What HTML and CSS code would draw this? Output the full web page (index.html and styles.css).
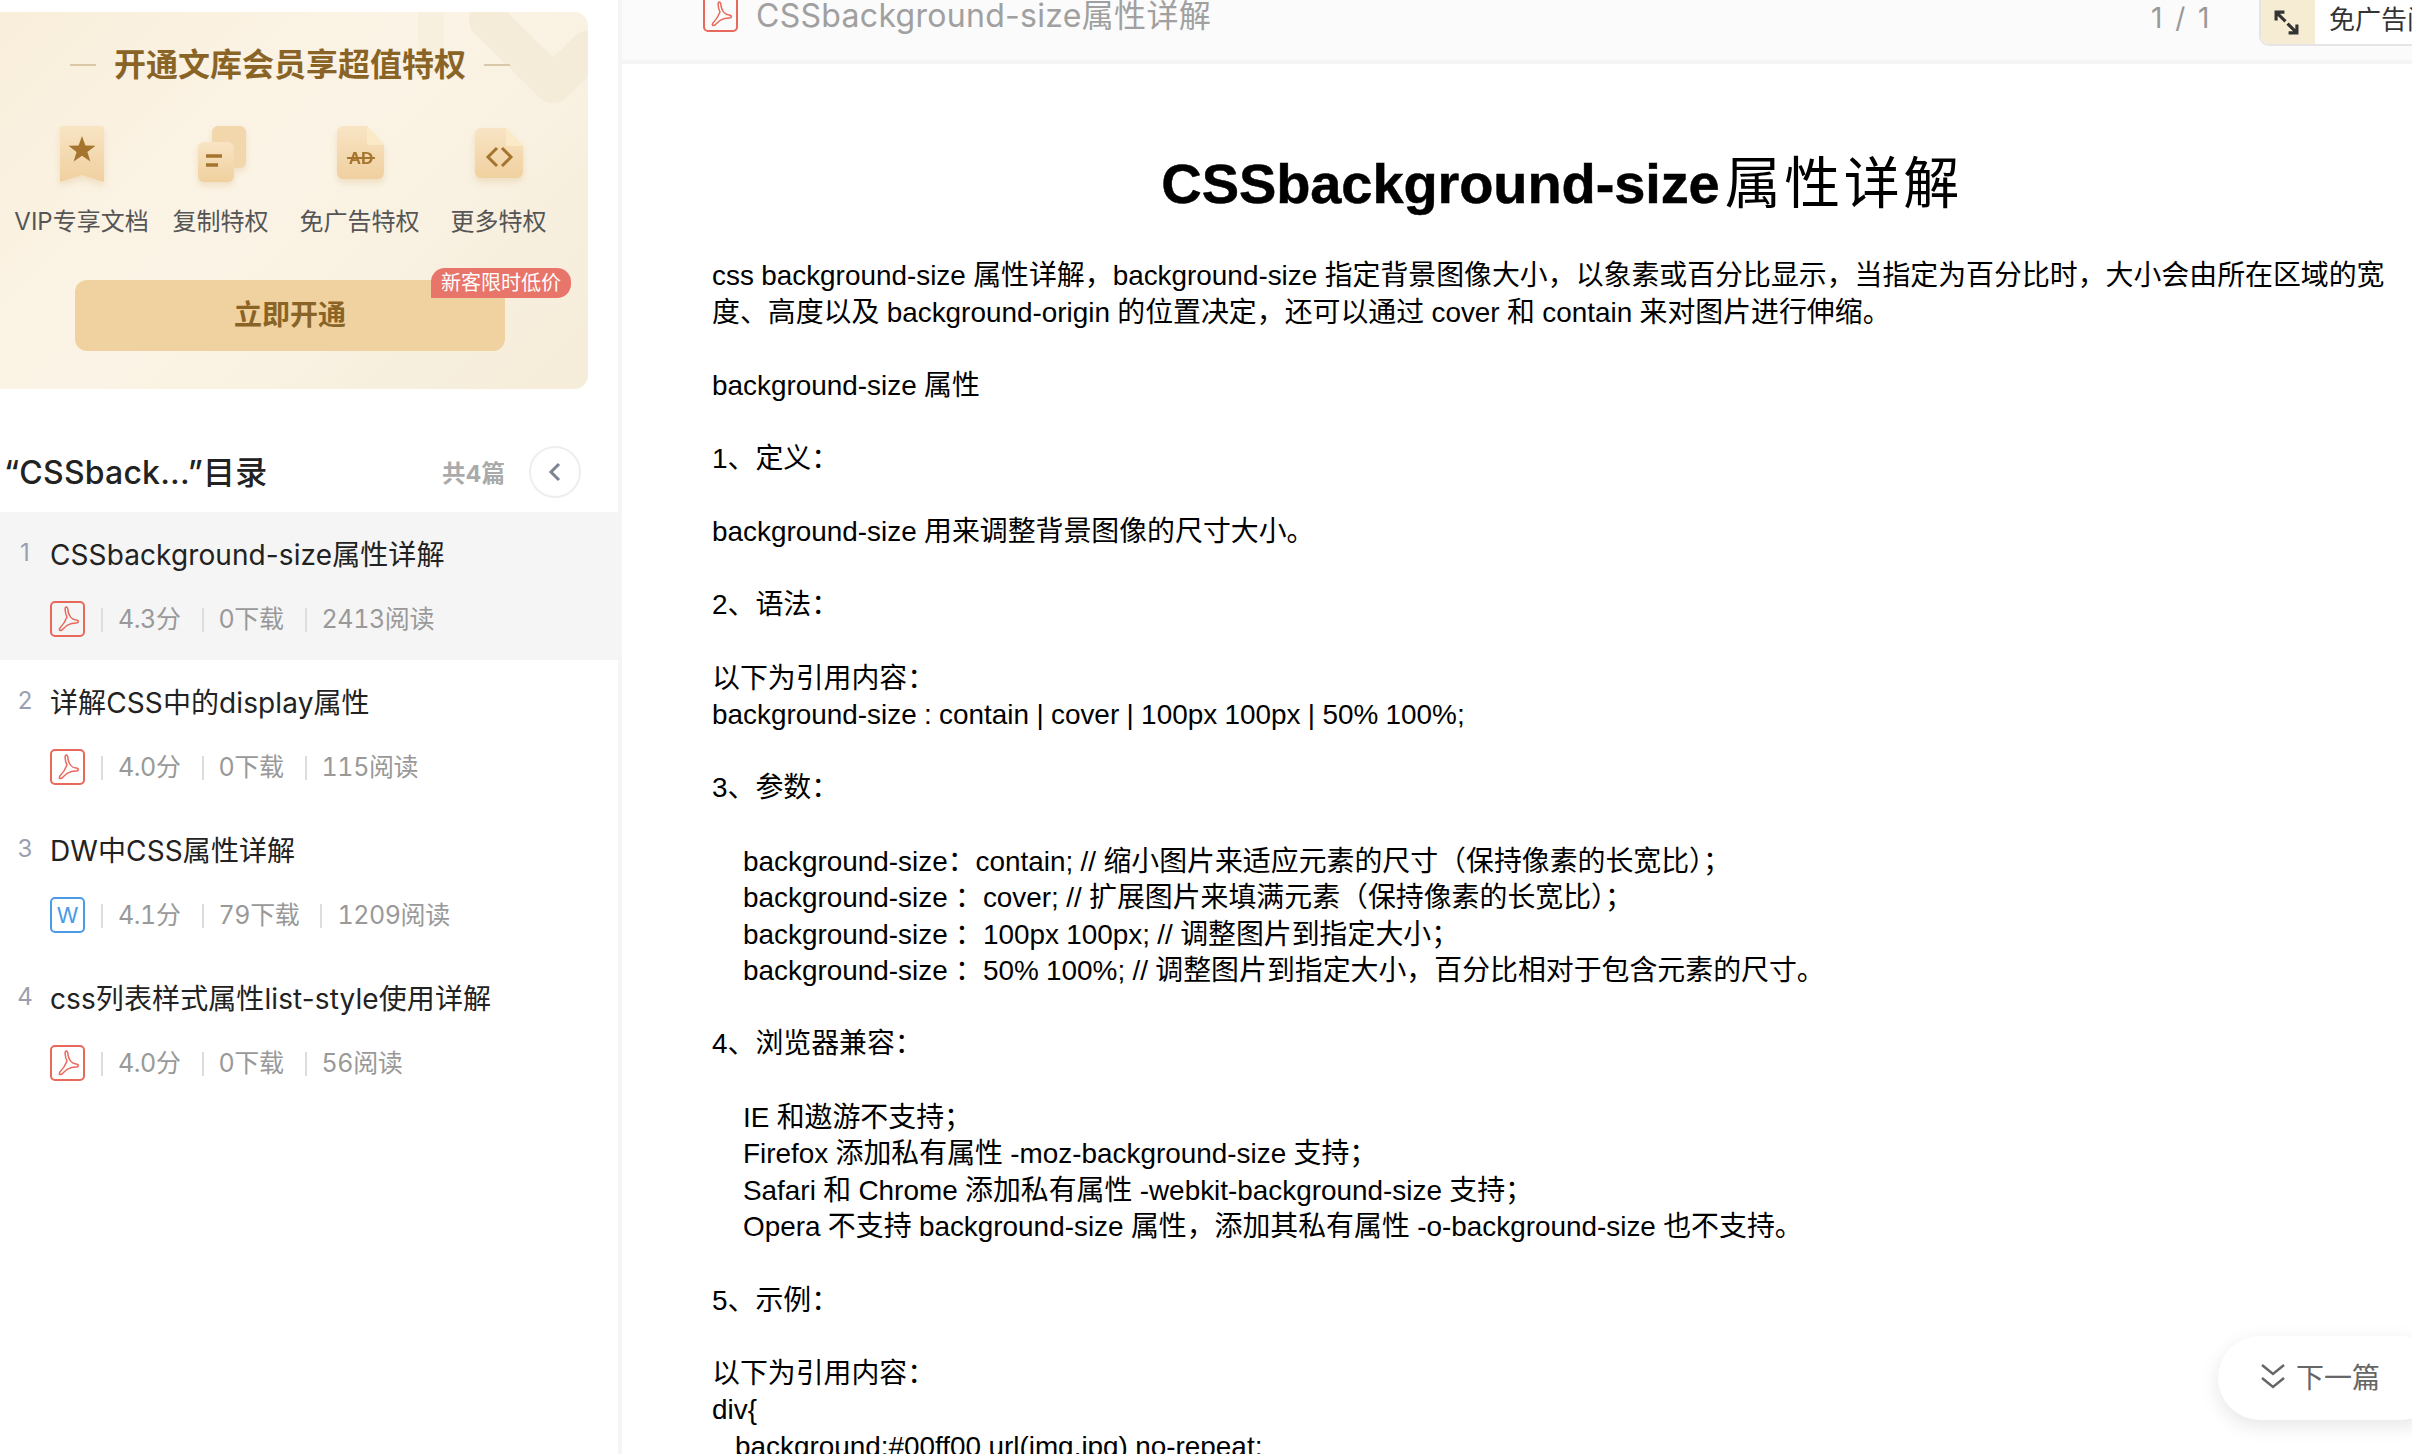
FILE: index.html
```html
<!DOCTYPE html>
<html lang="zh-CN">
<head>
    <meta charset="UTF-8">
    <title>CSSbackground-size属性详解</title>
    <link rel="stylesheet" href="styles.css">
</head>
<body>
    <svg class="defs" width="0" height="0">
        <defs>
            <linearGradient id="gold" x1="0" y1="0" x2="0" y2="1">
                <stop offset="0" stop-color="#f8e4c4"/>
                <stop offset="1" stop-color="#f0d09f"/>
            </linearGradient>
            <symbol id="pdf" viewBox="0 0 35 36">
                <rect x="1" y="1" width="33" height="34" rx="4" fill="none" stroke="#e8695c" stroke-width="2"/>
                <path d="M16 6C14.500 6 15 12 17 16C15 21 12 25 10 27C8 30 11 30.500 13 28C16 25 19 22 26 22C29 22 29 19 26 19C22 19 19 15 18 10C18 7 17.500 6 16 6Z" fill="none" stroke="#e8695c" stroke-width="1.500"/>
            </symbol>
        </defs>
    </svg>

    <aside class="sidebar">
        <section class="vip-card">
            <svg class="vip-decor" viewBox="0 0 188 100" width="188" height="100">
                <rect x="18" y="0" width="26" height="60" fill="#f8f0de"/>
                <path d="M88 8L153 72L188 38" fill="none" stroke="#f4ebd9" stroke-width="38" stroke-linecap="round" stroke-linejoin="round"/>
            </svg>
            <h2 class="vip-title">开通文库会员享超值特权</h2>
            <div class="perks">
                <div class="perk">
                    <svg class="perk-icon" viewBox="0 0 56 56" width="56" height="56">
                        <path d="M6 3a3 3 0 0 1 3-3H47a3 3 0 0 1 3 3V56L28 49L6 56Z" fill="url(#gold)"/>
                        <path d="M28 10L31.400 19.600L41.500 19.800L33.400 25.900L36.400 35.600L28 29.800L19.600 35.600L22.600 25.900L14.500 19.800L24.600 19.600Z" fill="#a5752f"/>
                    </svg>
                    <span>VIP专享文档</span>
                </div>
                <div class="perk">
                    <svg class="perk-icon" viewBox="0 0 56 56" width="56" height="56">
                        <rect x="19" y="0" width="34" height="42" rx="6" fill="#f2d7ad"/>
                        <rect x="5" y="16" width="36" height="40" rx="6" fill="url(#gold)"/>
                        <path d="M13 30H29M13 39H25" stroke="#a5752f" stroke-width="3.500" fill="none"/>
                    </svg>
                    <span>复制特权</span>
                </div>
                <div class="perk">
                    <svg class="perk-icon" viewBox="0 0 56 56" width="56" height="56">
                        <path d="M11 0H35L52 19V47a6 6 0 0 1-6 6H11a6 6 0 0 1-6-6V6a6 6 0 0 1 6-6Z" fill="url(#gold)"/>
                        <path d="M35 0L52 19H35Z" fill="#fbeac8"/>
                        <text class="perk-ad" x="29" y="38" text-anchor="middle">AD</text>
                        <path d="M15 32H43" stroke="#a5752f" stroke-width="2" fill="none"/>
                    </svg>
                    <span>免广告特权</span>
                </div>
                <div class="perk">
                    <svg class="perk-icon" viewBox="0 0 56 56" width="56" height="56">
                        <path d="M10 2H35L52 20V46a6 6 0 0 1-6 6H10a6 6 0 0 1-6-6V8a6 6 0 0 1 6-6Z" fill="url(#gold)"/>
                        <path d="M35 2L52 20H35Z" fill="#fbeac8"/>
                        <path d="M26 22L17 31L26 40M31 22L40 31L31 40" fill="none" stroke="#a5752f" stroke-width="3"/>
                    </svg>
                    <span>更多特权</span>
                </div>
            </div>
            <div class="open-btn">
                立即开通
                <span class="open-badge">新客限时低价</span>
            </div>
        </section>

        <div class="toc-head">
            <h3 class="toc-title">“CSSback...”目录</h3>
            <span class="toc-count">共4篇</span>
            <span class="toc-back">
                <svg viewBox="0 0 14 20" width="14" height="20"><path d="M11 2L3 10L11 18" fill="none" stroke="#7d8392" stroke-width="3"/></svg>
            </span>
        </div>

        <div class="toc-item active">
            <span class="toc-num">1</span>
            <div class="toc-body">
                <div class="toc-name">CSSbackground-size属性详解</div>
                <div class="toc-meta">
                    <svg class="file-icon"><use href="#pdf"/></svg>
                    <span class="stat">4.3分</span>
                    <span class="stat">0下载</span>
                    <span class="stat">2413阅读</span>
                </div>
            </div>
        </div>
        <div class="toc-item">
            <span class="toc-num">2</span>
            <div class="toc-body">
                <div class="toc-name">详解CSS中的display属性</div>
                <div class="toc-meta">
                    <svg class="file-icon"><use href="#pdf"/></svg>
                    <span class="stat">4.0分</span>
                    <span class="stat">0下载</span>
                    <span class="stat">115阅读</span>
                </div>
            </div>
        </div>
        <div class="toc-item">
            <span class="toc-num">3</span>
            <div class="toc-body">
                <div class="toc-name">DW中CSS属性详解</div>
                <div class="toc-meta">
                    <span class="word-icon">W</span>
                    <span class="stat">4.1分</span>
                    <span class="stat">79下载</span>
                    <span class="stat">1209阅读</span>
                </div>
            </div>
        </div>
        <div class="toc-item">
            <span class="toc-num">4</span>
            <div class="toc-body">
                <div class="toc-name">css列表样式属性list-style使用详解</div>
                <div class="toc-meta">
                    <svg class="file-icon"><use href="#pdf"/></svg>
                    <span class="stat">4.0分</span>
                    <span class="stat">0下载</span>
                    <span class="stat">56阅读</span>
                </div>
            </div>
        </div>
    </aside>

    <main class="reader">
        <header class="reader-bar">
            <svg class="file-icon bar-icon"><use href="#pdf"/></svg>
            <span class="bar-title">CSSbackground-size属性详解</span>
            <span class="bar-pager">1 / 1</span>
            <div class="bar-tool">
                <span class="bar-expand">
                    <svg viewBox="0 0 24 24" width="25" height="25"><path d="M2 10V2H10M2 2L11 11M22 14V22H14M22 22L13 13" fill="none" stroke="#333" stroke-width="3"/></svg>
                </span>
                <span class="bar-noad">免广告阅读</span>
            </div>
        </header>

        <article class="doc">
            <h1 class="doc-title">CSSbackground-size<span class="doc-title-cn">属性详解</span></h1>
            <p>css background-size 属性详解，background-size 指定背景图像大小，以象素或百分比显示，当指定为百分比时，大小会由所在区域的宽<br>度、高度以及 background-origin 的位置决定，还可以通过 cover 和 contain 来对图片进行伸缩。</p>
            <p>background-size 属性</p>
            <p>1、定义：</p>
            <p>background-size 用来调整背景图像的尺寸大小。</p>
            <p>2、语法：</p>
            <p>以下为引用内容：<br>background-size : contain | cover | 100px 100px | 50% 100%;</p>
            <p>3、参数：</p>
            <p class="indent">background-size：contain; // 缩小图片来适应元素的尺寸（保持像素的长宽比）；<br>background-size ：cover; // 扩展图片来填满元素（保持像素的长宽比）；<br>background-size ：100px 100px; // 调整图片到指定大小；<br>background-size ：50% 100%; // 调整图片到指定大小，百分比相对于包含元素的尺寸。</p>
            <p>4、浏览器兼容：</p>
            <p class="indent">IE 和遨游不支持；<br>Firefox 添加私有属性 -moz-background-size 支持；<br>Safari 和 Chrome 添加私有属性 -webkit-background-size 支持；<br>Opera 不支持 background-size 属性，添加其私有属性 -o-background-size 也不支持。</p>
            <p>5、示例：</p>
            <p>以下为引用内容：<br>div{<br><span class="code-indent">background:#00ff00 url(img.jpg) no-repeat;</span></p>
        </article>

        <div class="next-btn">
            <svg viewBox="0 0 24 26" width="24" height="26"><path d="M1 2L12 11L23 2M1 15L12 24L23 15" fill="none" stroke="#666" stroke-width="2.500"/></svg>
            下一篇
        </div>
    </main>
</body>
</html>
```

FILE: styles.css
```css
* {
    box-sizing: border-box;
}
html, body {
    height: 100%;
}
body {
    display: flex;
    margin: 0;
    height: 1454px;
    overflow: hidden;
    background: #fff;
    font-family: Inter, "Noto Sans CJK SC", sans-serif;
}
.defs {
    position: absolute;
}

/* sidebar */
.sidebar {
    flex: 0 0 618px;
    padding-top: 12px;
}
.vip-card {
    position: relative;
    width: 588px;
    padding: 31px 8px 38px 0;
    overflow: hidden;
    border-radius: 0 14px 14px 0;
    background: linear-gradient(135deg, #f9eedb 0%, #fbf4e6 45%, #f5ecd9 100%);
}
.vip-decor {
    position: absolute;
    top: 0;
    right: 0;
}
.vip-title {
    position: relative;
    display: flex;
    align-items: center;
    justify-content: center;
    gap: 18px;
    margin: 0;
    font-size: 32px;
    line-height: 44px;
    font-weight: 700;
    color: #8a6427;
}
.vip-title::before,
.vip-title::after {
    content: "";
    width: 26px;
    height: 2px;
    background: #d9c9a8;
}
.perks {
    position: relative;
    display: grid;
    grid-template-columns: repeat(4, 139px);
    margin: 39px 0 0 12px;
}
.perk {
    display: flex;
    flex-direction: column;
    align-items: center;
    gap: 24px;
    font-size: 24px;
    line-height: 32px;
    color: #555;
    white-space: nowrap;
}
.perk-icon {
    filter: drop-shadow(0 4px 3px rgba(226, 196, 150, 0.4));
}
.perk-ad {
    font-family: "Liberation Sans", sans-serif;
    font-size: 17px;
    font-weight: 700;
    fill: #a5752f;
}
.open-btn {
    position: relative;
    width: 430px;
    height: 71px;
    margin: 42px 0 0 75px;
    border-radius: 12px;
    background: #f0d2a0;
    font-size: 28px;
    font-weight: 700;
    line-height: 71px;
    text-align: center;
    color: #8a6427;
}
.open-badge {
    position: absolute;
    top: -12px;
    right: -66px;
    width: 140px;
    height: 30px;
    border-radius: 14px 14px 14px 0;
    background: #e8756a;
    font-size: 20px;
    font-weight: 400;
    line-height: 30px;
    color: #fff;
}

.toc-head {
    display: flex;
    align-items: center;
    height: 80px;
    margin-top: 43px;
    padding: 0 37px 0 4px;
}
.toc-title {
    flex: 1;
    margin: -4px 0 0;
    font-size: 32px;
    font-weight: 500;
    letter-spacing: 0.2px;
    color: #222;
}
.toc-count {
    font-size: 23.500px;
    font-weight: 700;
    color: #aaa;
}
.toc-back {
    display: flex;
    align-items: center;
    justify-content: center;
    width: 52px;
    height: 52px;
    margin-left: 24px;
    border: 2px solid #eee;
    border-radius: 50%;
}
.toc-item {
    display: flex;
    height: 148px;
    padding-top: 23px;
}
.toc-item.active {
    background: #f5f5f5;
}
.toc-num {
    flex: 0 0 50px;
    font-size: 24px;
    line-height: 36px;
    text-align: center;
    color: #9a9fb0;
}
.toc-name {
    font-size: 28px;
    line-height: 40px;
    letter-spacing: 0.1px;
    color: #222;
    white-space: nowrap;
}
.toc-meta {
    display: flex;
    align-items: center;
    margin-top: 26px;
    font-size: 25px;
    letter-spacing: -0.4px;
    font-variant-numeric: tabular-nums;
    color: #999;
}
.file-icon {
    width: 35px;
    height: 36px;
}
.word-icon {
    width: 35px;
    height: 36px;
    border: 2px solid #4a9ae8;
    border-radius: 5px;
    background: #fff;
    font-size: 22px;
    line-height: 32px;
    text-align: center;
    color: #4a9ae8;
}
.stat {
    display: flex;
    align-items: center;
    gap: 15px;
    margin-left: 21px;
    line-height: 36px;
}
.file-icon + .stat,
.word-icon + .stat {
    margin-left: 16px;
}
.stat::before {
    content: "";
    width: 2px;
    height: 24px;
    margin-top: 2px;
    background: #ddd;
}

/* reader */
.reader {
    position: relative;
    flex: 1;
    min-width: 0;
    border-left: 4px solid #f5f5f5;
}
.reader-bar {
    display: flex;
    align-items: flex-start;
    height: 64px;
    padding-left: 81px;
    border-bottom: 4px solid #f5f5f5;
    background: #fbfbfb;
}
.bar-icon {
    margin-top: -4px;
}
.bar-title {
    margin-left: 18px;
    font-size: 32px;
    line-height: 32px;
    letter-spacing: 0.3px;
    color: #a0a0a0;
    white-space: nowrap;
}
.bar-pager {
    margin-left: auto;
    font-size: 28px;
    line-height: 36px;
    letter-spacing: 2.500px;
    color: #999;
}
.bar-tool {
    display: flex;
    flex: 0 0 153px;
    height: 46px;
    margin-left: 47px;
    overflow: hidden;
    border: solid #e5e5e5;
    border-width: 0 0 2px 2px;
    border-radius: 0 0 0 10px;
    background: #fff;
}
.bar-expand {
    display: flex;
    flex: 0 0 54px;
    align-items: center;
    justify-content: center;
    padding-right: 3px;
    background: #f5ecd3;
}
.bar-noad {
    margin-left: 14px;
    font-size: 26px;
    line-height: 40px;
    color: #333;
    white-space: nowrap;
}
.doc {
    padding: 85px 0 0 90px;
    font-family: "Liberation Sans", "Noto Sans CJK SC", sans-serif;
    font-size: 27.900px;
    line-height: 36.600px;
    word-spacing: -0.4px;
    color: #000;
    white-space: nowrap;
}
.doc p {
    margin: 0 0 36.600px;
}
.doc-title {
    margin: 0 0 39px;
    font-size: 56px;
    line-height: 70px;
    font-weight: 700;
    letter-spacing: -0.1px;
    text-align: center;
    -webkit-text-stroke: 0.5px #000;
}
.doc-title-cn {
    margin-left: 5px;
    font-weight: 400;
    letter-spacing: 3.500px;
    -webkit-text-stroke: 0;
}
.doc p.indent {
    padding-left: 31px;
}
.code-indent {
    margin-left: 23px;
}
.next-btn {
    position: absolute;
    top: 1336px;
    right: -30px;
    display: flex;
    align-items: center;
    gap: 11px;
    width: 224px;
    height: 84px;
    padding: 0 0 4px 43px;
    border-radius: 42px;
    background: #fff;
    box-shadow: 0 6px 20px rgba(0, 0, 0, 0.1);
    font-size: 28px;
    color: #666;
}
```
